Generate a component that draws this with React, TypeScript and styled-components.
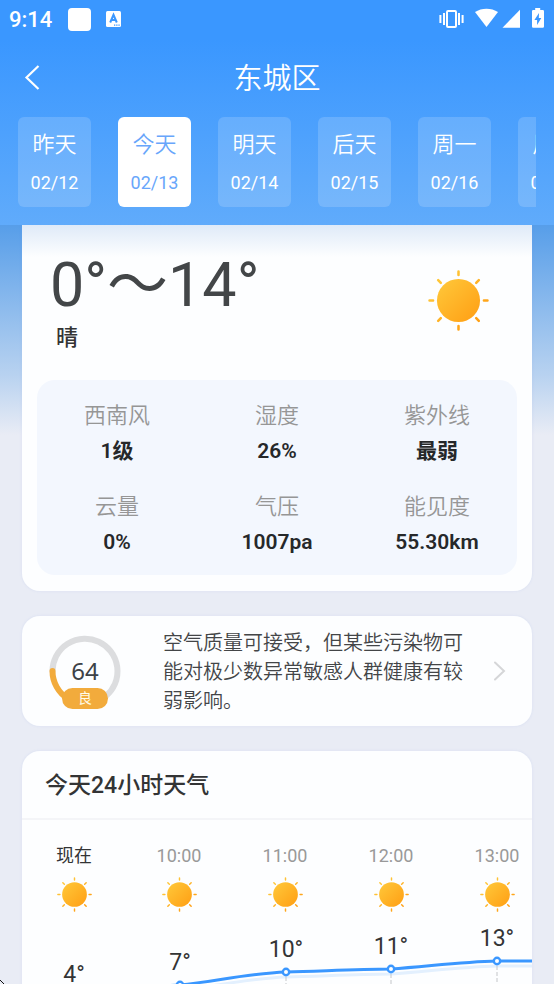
import React from "react";
import styled, { createGlobalStyle } from "styled-components";

const GlobalStyle = createGlobalStyle`
  * { box-sizing: border-box; }
  html, body, #root { height: 100%; }
  body {
    margin: 0;
    overflow: hidden;
    font-family: Roboto, "Noto Sans CJK SC", sans-serif;
    color: #333435;
  }
  button { font: inherit; border: 0; padding: 0; background: none; cursor: pointer; }
  h1, h2, p, dl, dd { margin: 0; }
`;

const Screen = styled.div`
  display: flex;
  flex-direction: column;
  height: 100vh;
  position: relative;
`;

const Header = styled.header`
  flex: none;
  padding-bottom: 18px;
  background: linear-gradient(#3a97ff 0, #3a97ff 40px, #60abfb 100%);
  color: #fff;
`;

const StatusBar = styled.div`
  display: flex;
  align-items: center;
  height: 38px;
  padding: 0 10px 0 9px;
`;

const Clock = styled.time`
  padding-top: 1px;
  font-size: 22px;
  line-height: 37px;
  font-weight: 500;
`;

const NoticeSquare = styled.span`
  width: 23px;
  height: 23px;
  margin-left: 16px;
  border-radius: 4px;
  background: #fff;
`;

const KeyboardIcon = styled.svg`
  width: 15px;
  height: 16px;
  margin-left: 15px;
`;

const SystemIcons = styled.svg`
  width: 106px;
  height: 24px;
  margin-left: auto;
`;

const NavBar = styled.div`
  display: grid;
  grid-template-columns: 48px 1fr 48px;
  align-items: center;
  height: 79px;
  padding: 0 8px;
`;

const BackButton = styled.button`
  display: flex;
  align-items: center;
  justify-content: center;
  height: 48px;
  color: #fff;
`;

const Title = styled.h1`
  padding-top: 2px;
  font-size: 29px;
  line-height: 40px;
  font-weight: 350;
  text-align: center;
`;

const DayTabs = styled.nav`
  display: flex;
  gap: 27px;
  margin: 0 18px;
  overflow: hidden;
`;

const DayTab = styled.button<{ $active?: boolean }>`
  flex: none;
  display: flex;
  flex-direction: column;
  align-items: center;
  justify-content: center;
  gap: 8px;
  width: 73px;
  height: 90px;
  padding-top: 2px;
  border-radius: 6px;
  background: ${(p) => (p.$active ? "#fff" : "rgba(255, 255, 255, 0.16)")};
  color: ${(p) => (p.$active ? "#68a6fb" : "#fff")};
`;

const DayName = styled.span`
  font-size: 22px;
  line-height: 32px;
  font-weight: 350;
`;

const DayDate = styled.span`
  font-size: 18px;
  line-height: 28px;
`;

const Content = styled.main`
  flex: 1;
  min-height: 0;
  overflow-y: auto;
  scrollbar-width: none;
  display: flex;
  flex-direction: column;
  gap: 25px;
  padding: 0 22px 24px;
  background: linear-gradient(#579ee9 0, #b8d2f0 150px, #e9ecf5 210px);
`;

const Card = styled.section`
  flex: none;
  border-radius: 18px;
  background: #fdfeff;
  overflow: hidden;
  box-shadow: 0 0 3px rgba(120, 150, 230, 0.14);
`;

const TodayCard = styled(Card)`
  padding: 24px 15px 16px;
  border-radius: 0 0 18px 18px;
  background: linear-gradient(#dfeaf8, #fdfeff 32px);
`;

const Summary = styled.div`
  display: flex;
  justify-content: space-between;
  align-items: flex-start;
  height: 131px;
  padding: 0 28px 0 13px;
`;

const TemperatureRange = styled.p`
  font-size: 61px;
  line-height: 73px;
  color: #434648;
`;

const Condition = styled.p`
  padding-left: 6px;
  font-size: 22px;
  line-height: 32px;
  font-weight: 500;
`;

const SunSvg = styled.svg<{ $size: number }>`
  display: block;
  width: ${(p) => p.$size}px;
  height: ${(p) => p.$size}px;
`;

const SunSlot = styled.div`
  padding-top: 21px;
`;

const Metrics = styled.dl`
  display: grid;
  grid-template-columns: repeat(3, 1fr);
  row-gap: 20px;
  padding: 18px 0 15px;
  border-radius: 18px;
  background: #f3f7fe;
`;

const Metric = styled.div`
  text-align: center;
`;

const MetricLabel = styled.dt`
  font-size: 22px;
  line-height: 35px;
  font-weight: 350;
  color: #969696;
`;

const MetricValue = styled.dd`
  font-size: 21px;
  line-height: 36px;
  font-weight: 600;
  color: #26282a;
`;

const AirCard = styled.a`
  flex: none;
  display: flex;
  align-items: center;
  min-height: 110px;
  padding: 0 25px 0 26px;
  border-radius: 18px;
  background: #fdfeff;
  box-shadow: 0 0 3px rgba(120, 150, 230, 0.14);
  color: #434547;
  text-decoration: none;
`;

const Gauge = styled.div`
  position: relative;
  flex: none;
  width: 74px;
  height: 74px;
  display: flex;
  align-items: center;
  justify-content: center;
`;

const GaugeRing = styled.svg`
  position: absolute;
  inset: 0;
`;

const GaugeValue = styled.span`
  font-family: "Noto Sans", sans-serif;
  font-size: 24px;
  line-height: 32px;
  color: #3d4247;
`;

const GaugeBadge = styled.span`
  position: absolute;
  left: 14px;
  bottom: -1px;
  width: 46px;
  border-radius: 11px;
  background: #f2ab3c;
  color: #fffbea;
  font-size: 14px;
  line-height: 21px;
  text-align: center;
`;

const AirText = styled.p`
  flex: 1;
  padding: 2px 22px 0 41px;
  font-size: 20px;
  line-height: 29px;
  font-weight: 350;
`;

const HourlyHeading = styled.h2`
  padding: 2px 23px 0;
  border-bottom: 2px solid #f4f5f8;
  font-size: 23px;
  line-height: 65px;
  font-weight: 500;
`;

const HourlyScroller = styled.div`
  overflow-x: auto;
  scrollbar-width: none;
`;

const HourRow = styled.div`
  display: flex;
  padding-top: 21px;
`;

const Hour = styled.div<{ $now?: boolean }>`
  flex: none;
  display: flex;
  flex-direction: column;
  align-items: center;
  gap: 6px;
  width: ${(p) => (p.$now ? 104 : 106)}px;
  font-size: 18px;
  line-height: 30px;
  color: ${(p) => (p.$now ? "#333435" : "#999")};
`;

const TemperatureChart = styled.svg`
  display: block;
  font-size: 23px;
`;

const Pointer = styled.svg`
  position: absolute;
  left: 0;
  bottom: 0;
`;

const days = [
  ["昨天", "02/12"],
  ["今天", "02/13"],
  ["明天", "02/14"],
  ["后天", "02/15"],
  ["周一", "02/16"],
  ["周二", "02/17"],
];

const metrics = [
  ["西南风", "1级"],
  ["湿度", "26%"],
  ["紫外线", "最弱"],
  ["云量", "0%"],
  ["气压", "1007pa"],
  ["能见度", "55.30km"],
];

const hours = [
  { time: "现在", temp: 4, x: 52, y: 85 },
  { time: "10:00", temp: 7, x: 158, y: 73 },
  { time: "11:00", temp: 10, x: 264, y: 60 },
  { time: "12:00", temp: 11, x: 369, y: 57 },
  { time: "13:00", temp: 13, x: 475, y: 49 },
  { time: "14:00", temp: 13, x: 581, y: 49 },
];

const curve = hours
  .map((h, i) => {
    if (i === 0) return `M${h.x} ${h.y}`;
    const p = hours[i - 1];
    return `C${p.x + 36} ${p.y - (p.y - h.y) * 0.3} ${h.x - 36} ${h.y + (p.y - h.y) * 0.1} ${h.x} ${h.y}`;
  })
  .join(" ");

function Sun({ size }: { size: number }) {
  const id = React.useId();
  return (
    <SunSvg $size={size} viewBox="0 0 60 60" aria-label="晴" role="img">
      <defs>
        <linearGradient id={id} gradientUnits="userSpaceOnUse" x1="12" y1="12" x2="48" y2="48">
          <stop offset="0" stopColor="#ffc638" />
          <stop offset="1" stopColor="#ffa116" />
        </linearGradient>
      </defs>
      <circle cx="30" cy="30" r="21.2" fill={`url(#${id})`} />
      <g stroke={`url(#${id})`} strokeWidth="2.5" strokeLinecap="round">
        <path d="M30.01 1.500 30 5M30.01 55 30 58.500M1.500 30.01 5 30M55 30.01 58.500 30" />
        <path d="M10 10l2.600 2.600M47.400 47.400l2.600 2.600M10 50l2.600-2.600M47.400 12.600l2.600-2.600" />
      </g>
    </SunSvg>
  );
}

export default function App() {
  return (
    <>
      <GlobalStyle />
      <Screen>
        <Header>
          <StatusBar>
            <Clock>9:14</Clock>
            <NoticeSquare />
            <KeyboardIcon viewBox="0 0 15 16" aria-hidden="true">
              <rect width="15" height="16" rx="1.5" fill="#fff" />
              <path d="M4.2 11.5 7.5 3.8l3.3 7.7M5.4 9h4.2" fill="none" stroke="#3a97ff" strokeWidth="2" />
              <path d="M8 14.2h1.3M10.2 14.2h1.3M12.4 14.2h1.3" stroke="#3a97ff" strokeWidth="1.3" />
            </KeyboardIcon>
            <SystemIcons viewBox="0 0 106 24" fill="#fff" aria-hidden="true">
              <rect x="9" y="4" width="9" height="16" rx="1" fill="none" stroke="#fff" strokeWidth="2" />
              <path d="M5 6h2v12H5zM20 6h2v12h-2zM1.400 8h2v8h-2zM23.600 8h2v8h-2z" />
              <path d="M37 5C43.500 0.500 53.500 0.500 60 5L48.500 20Z" />
              <path d="M82 2.700V20.700H64.500Z" />
              <path
                fillRule="evenodd"
                d="M97.200 1h5v2h2.600q1.200 0 1.200 1.200v15.300q0 1.200-1.200 1.200h-9.600q-1.200 0-1.200-1.200v-15.300q0-1.200 1.200-1.200h2zM101 6l-4.600 7h2.700v5l4.200-7h-2.500z"
              />
            </SystemIcons>
          </StatusBar>
          <NavBar>
            <BackButton aria-label="返回">
              <svg width="16" height="26" viewBox="0 0 16 26" fill="none" stroke="currentColor" strokeWidth="2.200">
                <path d="M14.500 1 2.500 12.500 14.500 24" />
              </svg>
            </BackButton>
            <Title>东城区</Title>
          </NavBar>
          <DayTabs>
            {days.map(([name, date]) => (
              <DayTab key={date} $active={name === "今天"} aria-pressed={name === "今天"}>
                <DayName>{name}</DayName>
                <DayDate>{date}</DayDate>
              </DayTab>
            ))}
          </DayTabs>
        </Header>
        <Content>
          <TodayCard>
            <Summary>
              <div>
                <TemperatureRange>0°～14°</TemperatureRange>
                <Condition>晴</Condition>
              </div>
              <SunSlot>
                <Sun size={61} />
              </SunSlot>
            </Summary>
            <Metrics>
              {metrics.map(([label, value]) => (
                <Metric key={label}>
                  <MetricLabel>{label}</MetricLabel>
                  <MetricValue>{value}</MetricValue>
                </Metric>
              ))}
            </Metrics>
          </TodayCard>
          <AirCard href="#air">
            <Gauge>
              <GaugeRing viewBox="0 0 74 74" fill="none" strokeWidth="6" strokeLinecap="round" aria-hidden="true">
                <path d="M4.500 37A32.500 32.500 0 1 1 58 62" stroke="#dcdddf" />
                <path d="M4.500 37A32.500 32.500 0 0 0 20 64.700" stroke="#f2ab3c" />
              </GaugeRing>
              <GaugeValue>64</GaugeValue>
              <GaugeBadge>良</GaugeBadge>
            </Gauge>
            <AirText>空气质量可接受，但某些污染物可能对极少数异常敏感人群健康有较弱影响。</AirText>
            <svg width="15" height="22" viewBox="0 0 15 22" fill="none" stroke="#d5d6d8" strokeWidth="2" strokeLinecap="round" aria-hidden="true">
              <path d="M3 2.500 12 11 3 19.500" />
            </svg>
          </AirCard>
          <Card>
            <HourlyHeading>今天24小时天气</HourlyHeading>
            <HourlyScroller>
              <HourRow>
                {hours.map((h, i) => (
                  <Hour key={h.time} $now={i === 0}>
                    <span>{h.time}</span>
                    <Sun size={35} />
                  </Hour>
                ))}
              </HourRow>
              <TemperatureChart width="634" height="140" viewBox="0 0 634 140">
                <path d={curve} transform="translate(0 5)" fill="none" stroke="#e3f0fe" strokeWidth="3" />
                <path d={curve} fill="none" stroke="#3a97ff" strokeWidth="3" />
                {hours.map((h) => (
                  <g key={h.time}>
                    <path d={`M${h.x} ${h.y + 5}V140`} stroke="#c4c6c9" strokeDasharray="4 2" />
                    <circle cx={h.x} cy={h.y} r="3.200" fill="#fff" stroke="#3a97ff" strokeWidth="2.400" />
                    <text x={h.x} y={h.y - 15} textAnchor="middle" fill="#333435">{`${h.temp}°`}</text>
                  </g>
                ))}
              </TemperatureChart>
            </HourlyScroller>
          </Card>
        </Content>
        <Pointer width="4" height="4" viewBox="0 0 4 4" aria-hidden="true">
          <path d="M0 0h1v1h1v1h1v1h1v1H3V3H2V2H1V1H0z" fill="#111" />
        </Pointer>
      </Screen>
    </>
  );
}
